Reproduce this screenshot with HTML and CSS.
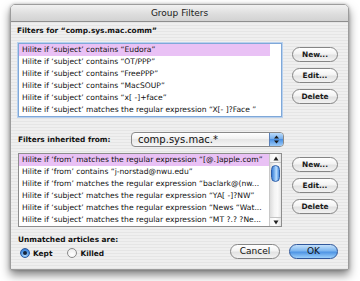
FILE: index.html
```html
<!DOCTYPE html>
<html>
<head>
<meta charset="utf-8">
<link rel="stylesheet" href="styles.css">
</head>
<body>
<div class="window">
  <div class="titlebar">Group Filters</div>
  <div class="content">
    <div class="label first">Filters for “comp.sys.mac.comm”</div>
    <div class="group">
      <div class="list focus">
        <div class="rows">
          <div class="row sel">Hilite if ‘subject’ contains “Eudora”</div>
          <div class="row">Hilite if ‘subject’ contains “OT/PPP”</div>
          <div class="row">Hilite if ‘subject’ contains “FreePPP”</div>
          <div class="row">Hilite if ‘subject’ contains “MacSOUP”</div>
          <div class="row">Hilite if ‘subject’ contains “x[ -]+face”</div>
          <div class="row">Hilite if ‘subject’ matches the regular expression “X[- ]?Face ”</div>
        </div>
        <div class="scroll empty"></div>
      </div>
      <div class="buttons">
        <div class="btn">New...</div>
        <div class="btn">Edit...</div>
        <div class="btn">Delete</div>
      </div>
    </div>
    <div class="inherit">
      <div class="label">Filters inherited from:</div>
      <div class="popup">
        <span class="popup-text">comp.sys.mac.*</span>
        <span class="popup-arrows">
          <svg width="7" height="9" viewBox="0 0 7 9"><path d="M3.5 0.5 L6 3.5 H1 Z M3.5 8.5 L6 5.5 H1 Z" fill="#1a1a1a"/></svg>
        </span>
      </div>
    </div>
    <div class="group second">
      <div class="list">
        <div class="rows">
          <div class="row sel">Hilite if ‘from’ matches the regular expression “[@.]apple.com”</div>
          <div class="row">Hilite if ‘from’ contains “j-norstad@nwu.edu”</div>
          <div class="row">Hilite if ‘from’ matches the regular expression “baclark@(nw...</div>
          <div class="row">Hilite if ‘subject’ matches the regular expression “YA[ -]?NW”</div>
          <div class="row">Hilite if ‘subject’ matches the regular expression “News “Wat...</div>
          <div class="row">Hilite if ‘subject’ matches the regular expression “MT ?.? ?Ne...</div>
        </div>
        <div class="scroll">
          <div class="arrow up"><svg width="6" height="5" viewBox="0 0 6 5"><path d="M3 0.5 L5.5 4.5 H0.5 Z" fill="#222"/></svg></div>
          <div class="track"><div class="thumb"></div></div>
          <div class="arrow down"><svg width="6" height="5" viewBox="0 0 6 5"><path d="M3 4.5 L5.5 0.5 H0.5 Z" fill="#222"/></svg></div>
        </div>
      </div>
      <div class="buttons">
        <div class="btn">New...</div>
        <div class="btn">Edit...</div>
        <div class="btn">Delete</div>
      </div>
    </div>
    <div class="footer">
      <div class="unmatched">
        <div class="label">Unmatched articles are:</div>
        <div class="radios">
          <span class="radio on"><span class="dot"></span></span><span class="rlabel">Kept</span>
          <span class="radio"></span><span class="rlabel">Killed</span>
        </div>
      </div>
      <div class="actions">
        <div class="btn big">Cancel</div>
        <div class="btn big default">OK</div>
      </div>
    </div>
  </div>
</div>
</body>
</html>
```
FILE: styles.css
```css
html, body {
  margin: 0;
  padding: 0;
  background: #ffffff;
  width: 360px;
  height: 281px;
  overflow: hidden;
}
body {
  font-family: "DejaVu Sans", "Verdana", sans-serif;
  color: #111;
}
.window {
  margin: 4px 0 0 10px;
  width: 339px;
  height: 266px;
  box-sizing: border-box;
  border: 1px solid #9c9c9c;
  border-radius: 5px 5px 0 0;
  background: repeating-linear-gradient(180deg, #efefef 0 2px, #e5e5e5 2px 3px);
  box-shadow: 0 5px 10px rgba(0,0,0,0.5), 0 0 3px rgba(0,0,0,0.25);
  display: flex;
  flex-direction: column;
}
.titlebar {
  height: 16px;
  border-bottom: 1px solid #8e8e8e;
  border-radius: 4px 4px 0 0;
  background: linear-gradient(180deg, #f1f1f1 0%, #dedede 55%, #d2d2d2 100%);
  font-size: 9px;
  line-height: 16px;
  text-align: center;
  color: #1a1a1a;
}
.content {
  padding: 4px 10px 0 6px;
  display: flex;
  flex-direction: column;
}
.label {
  font-weight: bold;
  font-size: 7.4px;
  line-height: 10px;
  white-space: nowrap;
}
.first {
  margin-bottom: 7px;
}
.group {
  display: flex;
  gap: 10px;
}
.list {
  margin-left: 1px;
  width: 264px;
  height: 74px;
  box-sizing: border-box;
  border: 1px solid #8d8d8d;
  background: #fff;
  display: flex;
}
.list.focus {
  border-color: #7fa8d8;
  box-shadow: 0 0 0 1px #b9d1ee;
}
.rows {
  flex: 1;
  overflow: hidden;
}
.row {
  height: 12px;
  line-height: 12px;
  font-size: 7.6px;
  padding-left: 3px;
  white-space: nowrap;
  overflow: hidden;
}
.row.sel {
  background: #e9c1f5;
}
.scroll {
  width: 11px;
  background: #fff;
  display: flex;
  flex-direction: column;
}
.scroll:not(.empty) {
  border-left: 1px solid #c8c8c8;
  background: linear-gradient(90deg, #dcdcdc, #f4f4f4 40%, #fafafa 70%, #e6e6e6);
}
.arrow {
  height: 8px;
  display: flex;
  align-items: center;
  justify-content: center;
  background: linear-gradient(90deg, #f4f4f4, #ffffff 50%, #e4e4e4);
}
.arrow.up { border-bottom: 1px solid #c4c4c4; }
.arrow.down { border-top: 1px solid #c4c4c4; }
.track {
  flex: 1;
  padding: 1px 1px;
}
.thumb {
  height: 15px;
  margin-top: 1px;
  border-radius: 5px;
  border: 1px solid #2f5fa8;
  background: linear-gradient(90deg, #3a7fd8, #8ec0f4 45%, #bfe0ff 60%, #4a8fe0);
}
.buttons {
  display: flex;
  flex-direction: column;
  gap: 6px;
  padding-top: 4px;
}
.btn {
  width: 46px;
  height: 15px;
  box-sizing: border-box;
  border: 1px solid #858585;
  border-radius: 8px;
  background: linear-gradient(180deg, #ffffff 0%, #f3f3f3 45%, #e2e2e2 55%, #f2f2f2 100%);
  font-weight: bold;
  font-size: 7.4px;
  line-height: 13px;
  text-align: center;
  color: #1a1a1a;
}
.inherit {
  display: flex;
  align-items: center;
  margin-top: 15px;
  height: 15px;
}
.inherit .label {
  width: 113px;
  margin-left: 1px;
}
.popup {
  width: 153px;
  height: 15px;
  box-sizing: border-box;
  border: 1px solid #8a8a8a;
  border-radius: 4px;
  background: linear-gradient(180deg, #ffffff, #f0f0f0 50%, #e6e6e6 50%, #f6f6f6);
  display: flex;
  overflow: hidden;
}
.popup-text {
  flex: 1;
  font-size: 10px;
  line-height: 13px;
  padding-left: 6px;
}
.popup-arrows {
  width: 13px;
  border-left: 1px solid #5a80b8;
  background: linear-gradient(180deg, #bcdcfb, #6ea9ea 50%, #4b91e4 50%, #9dcbf7);
  display: flex;
  align-items: center;
  justify-content: center;
}
.second {
  margin-top: 6px;
}
.footer {
  display: flex;
  justify-content: space-between;
  margin-top: 8px;
}
.unmatched {
  margin-left: 1px;
}
.radios {
  display: flex;
  align-items: center;
  margin-top: 3px;
  margin-left: 2px;
}
.radio {
  width: 10px;
  height: 10px;
  box-sizing: border-box;
  border-radius: 50%;
  border: 1px solid #8a8a8a;
  background: radial-gradient(circle at 50% 70%, #ffffff, #e8e8e8);
  display: flex;
  align-items: center;
  justify-content: center;
}
.radio.on {
  border-color: #2a5aa0;
  background: radial-gradient(circle at 50% 75%, #b8e0ff, #4a90e0 60%, #2f6fc8);
}
.dot {
  width: 4px;
  height: 4px;
  border-radius: 50%;
  background: #14233a;
}
.rlabel {
  font-weight: bold;
  font-size: 7.4px;
  margin-left: 3px;
  margin-right: 15px;
}
.actions {
  display: flex;
  gap: 9px;
  padding-top: 9px;
}
.btn.big {
  width: 50px;
  font-weight: normal;
  font-size: 9px;
  color: #111;
}
.btn.default {
  width: 49px;
  border-color: #30579a;
  background: linear-gradient(180deg, #c3e0fb 0%, #7db6ef 45%, #4f95e4 55%, #9cd0fb 100%);
}
```
